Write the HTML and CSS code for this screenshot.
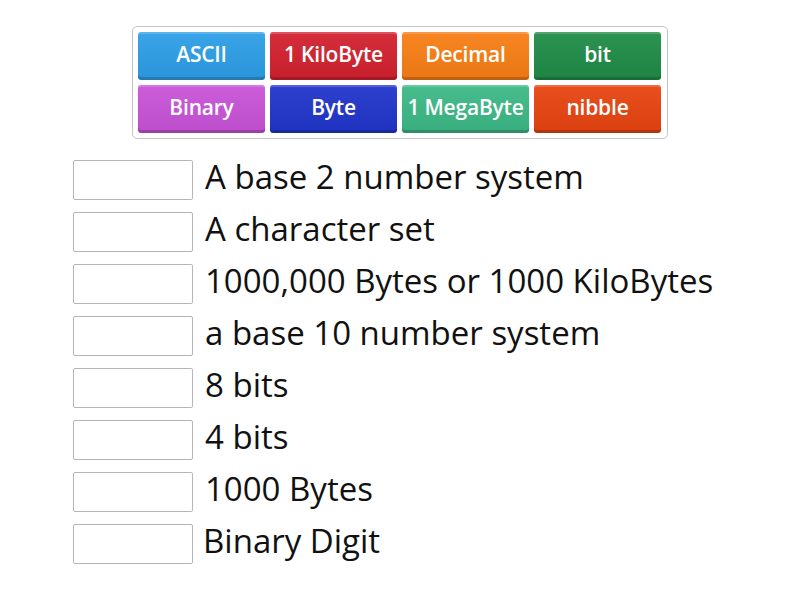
FILE: index.html
```html
<!DOCTYPE html>
<html>
<head>
<meta charset="utf-8">
<link rel="stylesheet" href="styles.css">
</head>
<body>
<div class="bank">
  <div class="tile c-ascii">ASCII</div>
  <div class="tile c-kilo">1 KiloByte</div>
  <div class="tile c-decimal">Decimal</div>
  <div class="tile c-bit">bit</div>
  <div class="tile c-binary">Binary</div>
  <div class="tile c-byte">Byte</div>
  <div class="tile c-mega">1 MegaByte</div>
  <div class="tile c-nibble">nibble</div>
</div>
<ul class="list">
  <li class="row"><span class="slot"></span><span class="def">A base 2 number system</span></li>
  <li class="row"><span class="slot"></span><span class="def">A character set</span></li>
  <li class="row"><span class="slot"></span><span class="def">1000,000 Bytes or 1000 KiloBytes</span></li>
  <li class="row"><span class="slot"></span><span class="def">a base 10 number system</span></li>
  <li class="row"><span class="slot"></span><span class="def">8 bits</span></li>
  <li class="row"><span class="slot"></span><span class="def">4 bits</span></li>
  <li class="row"><span class="slot"></span><span class="def">1000 Bytes</span></li>
  <li class="row"><span class="slot"></span><span class="def def-last">Binary Digit</span></li>
</ul>
</body>
</html>
```
FILE: styles.css
```css
html, body {
  margin: 0;
  padding: 0;
  background: #ffffff;
}
body {
  font-family: "Open Sans", "Noto Sans", sans-serif;
  color: #111;
}
.bank {
  width: 523px;
  margin: 26px auto 0;
  padding: 5px 6px 5px 5px;
  border: 1px solid #c4c4c4;
  border-radius: 5px;
  display: grid;
  grid-template-columns: repeat(4, 127px);
  grid-auto-rows: 48px;
  gap: 5px;
}
.tile {
  border-radius: 3px;
  color: #fff;
  font-size: 21px;
  font-weight: 600;
  display: flex;
  align-items: center;
  justify-content: center;
  padding-bottom: 4px;
  box-sizing: border-box;
  white-space: nowrap;
  letter-spacing: -0.2px;
  box-shadow: inset 0 2px 0 rgba(255,255,255,0.18), inset 0 -3px 0 rgba(0,0,0,0.18);
  background-image: linear-gradient(rgba(255,255,255,0.06), rgba(0,0,0,0.06));
}
.c-ascii { background-color: #2c9fe6; }
.c-kilo { background-color: #d3212f; }
.c-decimal { background-color: #f77e14; }
.c-bit { background-color: #1f8c48; }
.c-binary { background-color: #c852d8; }
.c-byte { background-color: #2135cb; }
.c-mega { background-color: #3cb886; }
.c-nibble { background-color: #e84410; }

.list {
  list-style: none;
  margin: 21px 0 0 73px;
  padding: 0;
  display: flex;
  flex-direction: column;
  gap: 12px;
}
.row {
  display: flex;
  align-items: center;
  height: 40px;
}
.slot {
  width: 118px;
  height: 38px;
  border: 1px solid #b5b5b5;
  border-radius: 2px;
  flex: none;
}
.def {
  margin-left: 12px;
  font-size: 33px;
  line-height: 40px;
  padding-bottom: 6px;
  white-space: nowrap;
}
.def-last {
  margin-left: 10px;
}
```
